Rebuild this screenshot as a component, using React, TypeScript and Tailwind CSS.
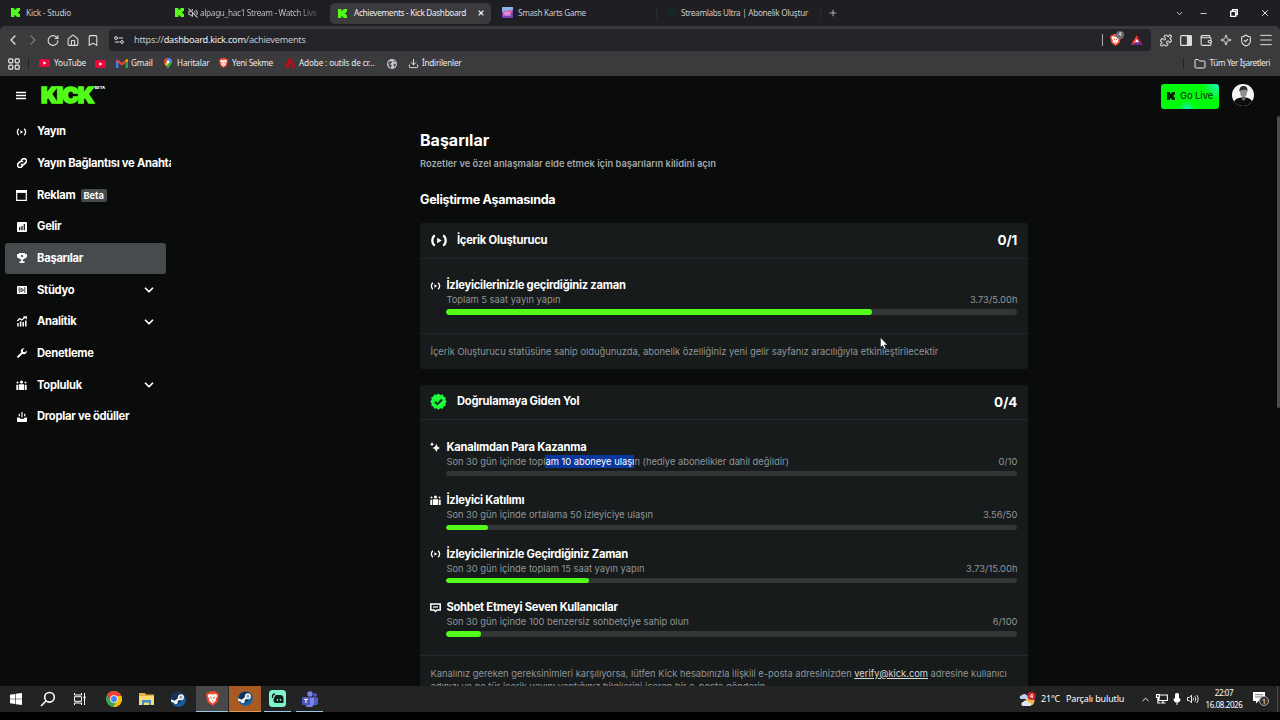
import type { ReactNode } from 'react';
import {
  Bookmark,
  ChevronDown,
  ChevronLeft,
  ChevronRight,
  ChevronUp,
  Download,
  Folder,
  House,
  Menu,
  Minus,
  Plus,
  Puzzle,
  RotateCw,
  ShieldCheck,
  Sparkle,
  VolumeOff,
  Wallet,
  X,
} from 'lucide-react';

interface IconProps {
  className?: string;
}

interface NavEntry {
  label: string;
  icon: ReactNode;
  badge?: string;
  active?: boolean;
  expandable?: boolean;
}

interface Goal {
  title: string;
  description: ReactNode;
  value: string;
  percent: number;
  icon: ReactNode;
}

/* ---------- Logos and icons ---------- */

function KickMark({ className = 'size-[9px] text-[#53fc18]' }: IconProps) {
  return (
    <svg viewBox="0 0 9 9" className={className} fill="currentColor">
      <path d="M0 0h3.4v2h1V1h1.1V0H9v3H8v1H7v1h1v1h1v3H5.500V8H4.400V7h-1v2H0z" />
    </svg>
  );
}

function BraveLogo({ className }: IconProps) {
  return (
    <svg viewBox="0 0 20 22" className={className}>
      <path d="M6 0h8l2 2 2-.3L20 5l-1 3 .3 2L17 17l-7 5-7-5L.7 10 1 8 0 5l2-3.300L4 2z" fill="#f4492c" />
      <path d="M4.500 4l5.500 1 5.500-1 2 3-3 5 1 2-5.500 4.500L4.500 14l1-2-3-5z" fill="#fff" />
      <path d="M6 8l3 1-1 3zM14 8l-3 1 1 3zM8 14h4l-2 1.500z" fill="#f4492c" />
    </svg>
  );
}

function YouTubeLogo() {
  return (
    <svg viewBox="0 0 11 8" className="h-[8px] w-[11px]">
      <rect width="11" height="8" rx="2" fill="#e8083a" />
      <path d="M4.300 2.200v3.600L7.500 4z" fill="#fff" />
    </svg>
  );
}

function GmailLogo() {
  return (
    <svg viewBox="0 0 12 9" className="h-[9px] w-[12px]" fill="none" strokeWidth="2.200">
      <path d="M1.200 9V1.500" stroke="#4285f4" />
      <path d="M10.800 9V1.500" stroke="#34a853" />
      <path d="M.8 1.200L6 5.300l5.200-4.100" stroke="#ea4335" />
      <path d="M10 2l1.600-1.200" stroke="#fbbc04" />
    </svg>
  );
}

function MapsLogo() {
  return (
    <svg viewBox="0 0 8 11" className="h-[11px] w-[8px]">
      <path d="M4 0a4 4 0 0 1 4 4c0 2.500-3 4-4 7-1-3-4-4.500-4-7a4 4 0 0 1 4-4z" fill="#34a853" />
      <path d="M0 4a4 4 0 0 1 4-4l-1 4-2.300 2.200z" fill="#ea4335" />
      <path d="M4 0a4 4 0 0 1 4 4L4 4z" fill="#4285f4" />
      <path d="M.7 6.200L3 4l1.500 1.500-2 2.800z" fill="#fbbc04" />
      <circle cx="4" cy="4" r="1.400" fill="#fff" />
    </svg>
  );
}

function GlobeIcon() {
  return (
    <svg viewBox="0 0 10 10" className="size-[10px]">
      <circle cx="5" cy="5" r="5" fill="#c9c9cc" />
      <path d="M1 3.500L3 2l2 .5-.5 1.500L3 5l1.500 1v1.500L3.500 9 2 7.500zM6 1l2.500 1.500L7 3.500zM6.500 5L9 4.800 8.500 7 7 8z" fill="#4a4a4e" />
    </svg>
  );
}

function LiveIcon({ className }: IconProps) {
  return (
    <svg viewBox="0 0 18 14" className={className} fill="none" stroke="currentColor" strokeWidth="2.400">
      <path d="M4.500 1.500C.9 3.800.9 10.200 4.500 12.500M13.500 1.500c3.600 2.300 3.600 8.700 0 11" />
      <path d="M7 4l5 3-5 3z" fill="currentColor" stroke="none" />
    </svg>
  );
}

function PeopleIcon({ className }: IconProps) {
  return (
    <svg viewBox="0 0 11 11" className={className} fill="currentColor">
      <circle cx="5.500" cy="2" r="1.600" />
      <circle cx="1.500" cy="2.600" r="1" />
      <circle cx="9.500" cy="2.600" r="1" />
      <path d="M3 4.300h5V10H3zM.3 4.800h2V10h-2zM8.700 4.800h2V10h-2z" />
    </svg>
  );
}

function ChatIcon({ className }: IconProps) {
  return (
    <svg viewBox="0 0 11 10" className={className} fill="none" stroke="currentColor" strokeWidth="1.500">
      <path d="M.8.900h9.400v6H7L5.500 8.500 4 6.900H.8z" />
      <path d="M3 4h5" strokeWidth="1.200" />
    </svg>
  );
}

function SparklesIcon({ className }: IconProps) {
  return (
    <svg viewBox="0 0 10 10" className={className} fill="currentColor">
      <path d="M6.300 1.800l1.300 2.900L10 6 7.600 7.300 6.300 10 5 7.300 2.500 6 5 4.700z" />
      <path d="M2 .1l.7 1.400 1.400.7-1.400.7L2 4.300l-.7-1.400L-.1 2.200l1.400-.7z" />
    </svg>
  );
}

function VerifiedIcon() {
  return (
    <svg viewBox="0 0 18 18" className="size-[17px]">
      <path
        d="M9 .5l2 1.500 2.500-.5.9 2.300 2.300.9-.5 2.500L17.700 9l-1.500 2 .5 2.500-2.300.9-.9 2.300-2.500-.5-2 1.500-2-1.500-2.500.5-.9-2.300-2.300-.9.5-2.500L.3 9l1.500-2-.5-2.500 2.300-.9.9-2.300L7 2z"
        fill="#21fb3c"
      />
      <path d="M5.200 9.300l2.600 2.500 5-5" fill="none" stroke="#10331a" strokeWidth="2.200" />
    </svg>
  );
}

function LinkIcon() {
  return (
    <svg viewBox="0 0 10 10" className="size-[10px]" fill="none" stroke="currentColor" strokeWidth="1.600">
      <path d="M4 2.600L5.400 1.300a2.300 2.300 0 0 1 3.300 3.300L7.200 6.100a2.250 2.250 0 0 1-3.200 0" />
      <path d="M6 7.400L4.600 8.700a2.300 2.300 0 0 1-3.300-3.300L2.800 3.900a2.250 2.250 0 0 1 3.200 0" />
    </svg>
  );
}

function WindowIcon() {
  return (
    <svg viewBox="0 0 11 11" className="size-[11px]" fill="none" stroke="currentColor">
      <path d="M.7.500h9.600v9.800H.7z" strokeWidth="1.200" />
      <path d="M0 1.600h11" strokeWidth="2.600" />
    </svg>
  );
}

function RevenueIcon() {
  return (
    <svg viewBox="0 0 10 10" className="size-[10px]">
      <rect width="10" height="10" rx="1" fill="currentColor" />
      <path d="M2.700 8.300V5M5 8.300V4M7.300 8.300V2" stroke="#0a0b0b" strokeWidth="1.200" />
    </svg>
  );
}

function TrophyIcon() {
  return (
    <svg viewBox="0 0 10 10" className="size-[10px]" fill="currentColor">
      <path d="M2 0h6v.9h2v2.300C10 4.600 8.700 5.400 7.400 5.500 7 6.200 6.400 6.500 5.800 6.600V8.300H7.500V10h-5V8.300h1.700V6.600C3.600 6.500 3 6.200 2.600 5.500 1.300 5.400 0 4.600 0 3.200V.9h2z" />
      <path d="M5 1.400l1.400 1.500L5 4.400 3.600 2.900z" fill="#474b4d" />
    </svg>
  );
}

function StudioIcon() {
  return (
    <svg viewBox="0 0 10 8" className="h-[8px] w-[10px]">
      <rect width="10" height="8" rx=".5" fill="currentColor" />
      <path d="M2.200 1.200v5.600M7.800 1.200v5.600M4 2.300v3.400L6.700 4z" stroke="#0a0b0b" strokeWidth=".8" fill="none" />
    </svg>
  );
}

function AnalyticsIcon() {
  return (
    <svg viewBox="0 0 10 11" className="h-[11px] w-[10px]" fill="none" stroke="currentColor" strokeWidth="1.300">
      <path d="M.3 5l2.400-2.500 2 1.500L8 1.200M6.300.8h3v2.500" />
      <path d="M1 10.500V7M3.600 10.500V5.500M6.200 10.500V6M8.800 10.500V4.500" strokeWidth="1.500" />
    </svg>
  );
}

function WrenchIcon() {
  return (
    <svg viewBox="0 0 10 10" className="size-[10px]" fill="currentColor">
      <path d="M7.600.3L5.800 2.100l.3 1.800 1.800.3L9.700 2.400c.6 1.900-.8 4-3 3.800L5.300 6 1.900 9.600C.8 10.300-.3 9.200.4 8.100L4 4.700l-.1-1.400C3.700 1.100 5.700-.3 7.600.3z" />
    </svg>
  );
}

function DropsIcon() {
  return (
    <svg viewBox="0 0 10 10" className="size-[10px]" fill="currentColor">
      <path d="M0 5.500h2.300l1 1.300h3.400l1-1.300H10V10H0zM4.400 0h1.200v5.300H4.400zM1.700 1.800h1.200v2.500H1.700zM7.100 1.800h1.200v2.500H7.100z" />
    </svg>
  );
}

function SteamLogo() {
  return (
    <svg viewBox="0 0 16 16" className="size-[15px]">
      <circle cx="8" cy="8" r="7.800" fill="#1560a0" />
      <path d="M.6 6.500A7.800 7.800 0 0 1 15 5l-4 5-5 3.500z" fill="#123058" />
      <path d="M0 9l4.500 1.600L8 7.500l1-2.500" stroke="#f2f5f8" strokeWidth="2.400" fill="none" />
      <circle cx="10.600" cy="5.600" r="2.500" fill="#8fa6bf" stroke="#f2f5f8" strokeWidth="1.600" />
      <circle cx="5.200" cy="11" r="2" fill="#f2f5f8" />
    </svg>
  );
}

/* ---------- Browser chrome ---------- */

function BrowserTabs() {
  return (
    <div className="flex h-[26px] shrink-0 items-center bg-[#1f1f23] text-[8.2px] tracking-[-0.3px] text-[#c9c9cc]">
      <div className="flex w-[166px] items-center gap-[6px] pl-[11px]">
        <KickMark />
        <span className="tracking-[-0.15px]">Kick - Studio</span>
      </div>
      <div className="flex w-[164px] items-center pl-[9px]">
        <KickMark />
        <VolumeOff className="ml-[4px] size-[10px]" strokeWidth={2.500} />
        <span className="ml-[2px] w-[119px] bg-linear-to-r from-[#c9c9cc] from-80% to-[#3c3c40] bg-clip-text text-transparent">
          alpagu_hac1 Stream - Watch Live
        </span>
      </div>
      <div className="flex h-[21px] w-[161px] items-center rounded-[5px] bg-[#3b3b3e] pr-[6px] pl-[8px] text-[#f0f0f2]">
        <KickMark />
        <span className="ml-[7px]">Achievements - Kick Dashboard</span>
        <X className="ml-auto size-[8px]" strokeWidth={3.500} />
      </div>
      <div className="flex w-[166px] items-center border-r border-[#2b2b2f] pl-[11px]">
        <svg viewBox="0 0 11 11" className="size-[11px]">
          <rect width="11" height="11" rx="1" fill="#7a3fb0" />
          <path d="M0 0h11v3L0 5z" fill="#8fb3e6" />
          <path d="M1 5l4-1 5-1v3L6 8 1 9z" fill="#e05ab4" />
          <path d="M2 6h6M3 8h6" stroke="#f4d9ff" strokeWidth=".8" />
        </svg>
        <span className="ml-[5px]">Smash Karts Game</span>
      </div>
      <div className="flex w-[164px] items-center border-r border-[#2b2b2f] pl-[10px]">
        <span className="size-[9px] rounded-[2px] bg-[#172527]" />
        <span className="ml-[5px]">Streamlabs Ultra | Abonelik Oluştur</span>
      </div>
      <Plus className="ml-[7px] size-[10px]" />
      <div className="ml-auto flex items-center pr-[10px] text-white">
        <ChevronDown className="size-[9px]" />
        <Minus className="ml-[15px] size-[9px]" strokeWidth={2} />
        <svg viewBox="0 0 8 8" className="ml-[22px] size-[8px]" fill="none" stroke="currentColor" strokeWidth="1.300">
          <path d="M.7 2.300h5v5h-5zM2.500 2V.7h4.800v4.800H6" />
        </svg>
        <X className="ml-[22px] size-[10px]" />
      </div>
    </div>
  );
}

function Toolbar() {
  return (
    <div className="bg-[#1f1f23]">
      <div className="flex h-[25px] items-end rounded-t-[5px] bg-[#3b3b3e] pr-[4px] pl-[3px] text-[#dededf]">
        <div className="flex h-[22px] items-center *:w-[20px]">
          <ChevronLeft className="h-[16px]" />
          <ChevronRight className="h-[16px] text-[#77777b]" />
          <RotateCw className="h-[13px]" />
          <House className="h-[13px]" />
          <Bookmark className="h-[13px]" />
        </div>
        <div className="ml-[6px] flex h-[22px] w-[1042px] items-center rounded-[4px] bg-[#242428] pr-[8px] pl-[5px]">
          <svg viewBox="0 0 10 8" className="h-[8px] w-[10px]" fill="none" stroke="currentColor">
            <circle cx="2" cy="2" r="1.400" />
            <circle cx="8" cy="6" r="1.400" />
            <path d="M4.500 2H9M1 6h4.500" />
          </svg>
          <span className="ml-[10px] text-[9.2px] tracking-[-0.25px] text-[#c4c4c8]">
            https://<span className="text-[#eeeef0]">dashboard.kick.com</span>/achievements
          </span>
          <span className="ml-auto h-[12px] w-px bg-[#a9a9ac]" />
          <div className="relative ml-[7px]">
            <BraveLogo className="h-[12px] w-[11px]" />
            <span className="absolute -top-[3px] left-[6px] flex size-[8px] items-center justify-center rounded-full bg-[#6b6b70] text-[5px] text-white">
              4
            </span>
          </div>
          <svg viewBox="0 0 12 10" className="ml-[10px] h-[10px] w-[12px]">
            <path d="M6 0L0 10h6z" fill="#ff4724" />
            <path d="M6 0l6 10H6z" fill="#9e1f63" />
            <path d="M0 10h12L6 6.500z" fill="#662d91" />
            <path d="M6 4l2 3.300H4z" fill="#fff" />
          </svg>
        </div>
        <div className="ml-auto flex h-[22px] items-center *:w-[20px]">
          <Puzzle className="h-[13px]" />
          <svg viewBox="0 0 20 11" className="h-[11px]" fill="none" stroke="currentColor" strokeWidth="1.200">
            <rect x="4.600" y=".6" width="10.800" height="9.800" rx="1" />
            <path d="M11.500 1h3.500v9h-3.500z" fill="currentColor" />
          </svg>
          <Wallet className="h-[13px]" />
          <Sparkle className="h-[12px]" />
          <ShieldCheck className="h-[13px]" />
          <Menu className="h-[16px]" strokeWidth={1.500} />
        </div>
      </div>
    </div>
  );
}

function BookmarksBar() {
  return (
    <div className="flex h-[25px] shrink-0 items-center bg-[#3b3b3e] pr-[10px] pl-[8px] text-[8.2px] tracking-[-0.15px] text-[#ececee]">
      <svg viewBox="0 0 12 12" className="size-[12px]" fill="none" stroke="currentColor" strokeWidth="1.200">
        <rect x=".8" y=".8" width="4" height="4" rx="1" />
        <rect x="7.200" y=".8" width="4" height="4" rx="1" />
        <rect x=".8" y="7.200" width="4" height="4" rx="1" />
        <rect x="7.200" y="7.200" width="4" height="4" rx="1" />
      </svg>
      <span className="ml-[8px] h-[11px] w-px bg-[#232327]" />
      <div className="ml-[10px] flex w-[56px] items-center gap-[4px]">
        <YouTubeLogo />
        YouTube
      </div>
      <YouTubeLogo />
      <div className="ml-[10px] flex w-[48px] items-center gap-[3px]">
        <GmailLogo />
        Gmail
      </div>
      <div className="flex w-[55px] items-center gap-[5px]">
        <MapsLogo />
        Haritalar
      </div>
      <div className="flex w-[66px] items-center gap-[4px] tracking-[-0.3px]">
        <BraveLogo className="h-[10px] w-[9px]" />
        Yeni Sekme
      </div>
      <div className="flex w-[102px] items-center gap-[4px]">
        <svg viewBox="0 0 10 10" className="size-[10px]" fill="#b3101c">
          <path d="M0 10V8l3.500-7.500h3L10 8v2H7.500L5 5 3.500 8.500H5V10z" />
        </svg>
        Adobe : outils de cr...
      </div>
      <GlobeIcon />
      <Download className="ml-[11px] size-[11px]" />
      <span className="ml-[3px] tracking-[-0.25px]">İndirilenler</span>
      <span className="ml-auto h-[11px] w-px bg-[#232327]" />
      <Folder className="ml-[10px] size-[12px]" />
      <span className="ml-[4px] tracking-[-0.4px]">Tüm Yer İşaretleri</span>
    </div>
  );
}

/* ---------- Dashboard ---------- */

function DashboardHeader() {
  return (
    <header className="flex h-[40px] shrink-0 items-center pr-[26px] pb-[2px] pl-[16px]">
      <svg viewBox="0 0 10 8" className="h-[9px] w-[10px]" stroke="#fff" strokeWidth="1.700">
        <path d="M0 1h10M0 4h10M0 7h10" />
      </svg>
      <div className="ml-[15px] flex items-start">
        <span className="text-[22px] leading-[20px] font-black tracking-[-0.9px] text-[#53fc18] [-webkit-text-stroke:1.5px_#53fc18]">
          KICK
        </span>
        <span className="ml-[1px] text-[4px] leading-[6px] font-extrabold text-white">BETA</span>
      </div>
      <button className="mt-[2px] ml-auto flex h-[25px] w-[58px] items-center rounded-[3px] bg-[#02fb0c] bg-[radial-gradient(circle_at_100%_0%,#20f5c8_0,transparent_16px),radial-gradient(circle_at_45%_100%,#10efc0_0,transparent_8px)] pl-[6px] text-[#0b3a10]">
        <KickMark className="size-[8px] text-[#06230a]" />
        <span className="ml-[5px] text-[9.3px] font-medium">Go Live</span>
      </button>
      <svg viewBox="0 0 22 22" className="ml-[13px] size-[22px]">
        <clipPath id="avatar">
          <circle cx="11" cy="11" r="11" />
        </clipPath>
        <g clipPath="url(#avatar)">
          <rect width="22" height="22" fill="#f5f5f5" />
          <path d="M1 22c.5-5 2-7.500 8-8.500h5c5 1 7 3.500 7.500 8.500z" fill="#0a0b0b" />
          <ellipse cx="11.500" cy="8.500" rx="3.400" ry="5" fill="#8f8f8f" />
          <path d="M7.500 7.500C7 3 10 1.500 12 2c3 .5 4 3 3.300 6L14 5.500l-4 .5z" fill="#2a2a2a" />
          <path d="M9.500 13h4v2.500l-2 1.500-2-2z" fill="#666" />
        </g>
      </svg>
    </header>
  );
}

const navEntries: NavEntry[] = [
  { label: 'Yayın', icon: <LiveIcon className="h-[8px] w-[11px]" /> },
  { label: 'Yayın Bağlantısı ve Anahtarı', icon: <LinkIcon /> },
  { label: 'Reklam', icon: <WindowIcon />, badge: 'Beta' },
  { label: 'Gelir', icon: <RevenueIcon /> },
  { label: 'Başarılar', icon: <TrophyIcon />, active: true },
  { label: 'Stüdyo', icon: <StudioIcon />, expandable: true },
  { label: 'Analitik', icon: <AnalyticsIcon />, expandable: true },
  { label: 'Denetleme', icon: <WrenchIcon /> },
  { label: 'Topluluk', icon: <PeopleIcon className="size-[11px]" />, expandable: true },
  { label: 'Droplar ve ödüller', icon: <DropsIcon /> },
];

function Sidebar() {
  return (
    <nav className="flex w-[171px] shrink-0 flex-col overflow-hidden pl-[5px]">
      {navEntries.map((entry) => (
        <div
          key={entry.label}
          className={
            entry.active
              ? 'flex h-[31.67px] w-[160.500px] shrink-0 items-center rounded-[3px] bg-[#474b4d] pl-[11px]'
              : 'flex h-[31.67px] shrink-0 items-center pl-[11px]'
          }
        >
          <span className="flex w-[11px] shrink-0 justify-center">{entry.icon}</span>
          <span className="ml-[10px] text-[11.2px] font-bold tracking-[-0.26px] whitespace-nowrap">{entry.label}</span>
          {entry.badge && (
            <span className="ml-[5px] rounded-[2px] bg-[#474b4d] px-[3px] text-[9.3px] leading-[13px] font-bold tracking-[-0.1px]">
              {entry.badge}
            </span>
          )}
          {entry.expandable && <ChevronDown className="mr-[15px] ml-auto size-[14px]" strokeWidth={3} />}
        </div>
      ))}
    </nav>
  );
}

function GoalRow({ goal }: { goal: Goal }) {
  return (
    <div>
      <div className="flex h-[16px] items-center">
        <span className="flex w-[16px] shrink-0">{goal.icon}</span>
        <h4 className="text-[11.2px] font-bold tracking-[-0.24px] whitespace-nowrap">{goal.title}</h4>
      </div>
      <div className="pl-[16px]">
        <div className="flex h-[13.600px] items-center justify-between text-[9.33px] text-[#8f9698]">
          <span>{goal.description}</span>
          <span>{goal.value}</span>
        </div>
        <div className="mt-[2.300px] h-[5.400px] overflow-hidden rounded-full bg-[#333637]">
          <div className="h-full rounded-full bg-[#53fc18]" style={{ width: `${goal.percent}%` }} />
        </div>
      </div>
    </div>
  );
}

interface CardProps {
  icon: ReactNode;
  title: string;
  score: string;
  goals: Goal[];
  footer: ReactNode;
}

function AchievementCard({ icon, title, score, goals, footer }: CardProps) {
  return (
    <section className="w-[608px] rounded-[3px] bg-[#171b1c]">
      <div className="flex h-[35.500px] items-center border-b border-[#24282a] pr-[10.600px] pl-[10.400px]">
        <span className="flex w-[26.500px] shrink-0">{icon}</span>
        <h3 className="text-[11.2px] font-bold tracking-[-0.22px]">{title}</h3>
        <span className="ml-auto text-[13.4px] font-bold">{score}</span>
      </div>
      <div className="flex flex-col gap-[16.200px] pt-[19.100px] pr-[10.600px] pb-[18.200px] pl-[10.400px]">
        {goals.map((goal) => (
          <GoalRow key={goal.title} goal={goal} />
        ))}
      </div>
      <p className="border-t border-[#24282a] px-[10.500px] py-[10.800px] text-[9.33px] leading-[13.400px] text-[#8f9698]">
        {footer}
      </p>
    </section>
  );
}

const creatorGoals: Goal[] = [
  {
    title: 'İzleyicilerinizle geçirdiğiniz zaman',
    description: 'Toplam 5 saat yayın yapın',
    value: '3.73/5.00h',
    percent: 74.6,
    icon: <LiveIcon className="h-[8px] w-[11px]" />,
  },
];

const verificationGoals: Goal[] = [
  {
    title: 'Kanalımdan Para Kazanma',
    description: (
      <>
        Son 30 gün içinde topl<span className="bg-[#0b389f] py-px text-white">am 10 aboneye ulaşı</span>n (hediye
        abonelikler dahil değildir)
      </>
    ),
    value: '0/10',
    percent: 0,
    icon: <SparklesIcon className="size-[10px]" />,
  },
  {
    title: 'İzleyici Katılımı',
    description: 'Son 30 gün içinde ortalama 50 izleyiciye ulaşın',
    value: '3.56/50',
    percent: 7.2,
    icon: <PeopleIcon className="size-[11px]" />,
  },
  {
    title: 'İzleyicilerinizle Geçirdiğiniz Zaman',
    description: 'Son 30 gün içinde toplam 15 saat yayın yapın',
    value: '3.73/15.00h',
    percent: 24.9,
    icon: <LiveIcon className="h-[8px] w-[11px]" />,
  },
  {
    title: 'Sohbet Etmeyi Seven Kullanıcılar',
    description: 'Son 30 gün içinde 100 benzersiz sohbetçiye sahip olun',
    value: '6/100',
    percent: 6,
    icon: <ChatIcon className="h-[10px] w-[11px]" />,
  },
];

function Achievements() {
  return (
    <main className="flex flex-1 flex-col overflow-hidden pt-[14px] pl-[249px]">
      <h1 className="text-[16px] leading-[20px] font-bold">Başarılar</h1>
      <p className="mt-[7px] text-[9.33px] leading-[14px] font-semibold text-[#a3a8aa]">
        Rozetler ve özel anlaşmalar elde etmek için başarıların kilidini açın
      </p>
      <h2 className="mt-[20px] text-[12.6px] leading-[18px] font-bold tracking-[-0.32px]">Geliştirme Aşamasında</h2>
      <div className="mt-[14px] flex flex-col gap-[15.500px]">
        <AchievementCard
          icon={<LiveIcon className="h-[13px] w-[18px]" />}
          title="İçerik Oluşturucu"
          score="0/1"
          goals={creatorGoals}
          footer="İçerik Oluşturucu statüsüne sahip olduğunuzda, abonelik özelliğiniz yeni gelir sayfanız aracılığıyla etkinleştirilecektir"
        />
        <AchievementCard
          icon={<VerifiedIcon />}
          title="Doğrulamaya Giden Yol"
          score="0/4"
          goals={verificationGoals}
          footer={
            <>
              Kanalınız gereken gereksinimleri karşılıyorsa, lütfen Kick hesabınızla ilişkili e-posta adresinizden{' '}
              <a className="text-[#d5d8d9] underline">verify@kick.com</a> adresine kullanıcı
              <br />
              adınızı ve ne tür içerik yayını yaptığınız bilgilerini içeren bir e-posta gönderin.
            </>
          }
        />
      </div>
    </main>
  );
}

/* ---------- Windows taskbar ---------- */

function Taskbar() {
  return (
    <div className="flex h-[26px] shrink-0 items-center bg-[#232323] text-white">
      <div className="flex h-full items-center">
        <span className="flex w-[32px] justify-center">
          <svg viewBox="0 0 12 12" className="size-[12px]" fill="#fff">
            <path d="M0 1.700l5.200-.8v4.800H0zM5.800.8L12 0v5.700H5.800zM0 6.300h5.200v4.800L0 10.300zM5.800 6.300H12V12l-6.200-.8z" />
          </svg>
        </span>
        <span className="flex w-[32px] justify-center">
          <svg viewBox="0 0 16 16" className="size-[16px]" fill="none" stroke="#fff" strokeWidth="1.600">
            <circle cx="9.500" cy="6.300" r="4.800" />
            <path d="M6.200 9.800L1 15" />
          </svg>
        </span>
        <span className="flex w-[32px] justify-center">
          <svg viewBox="0 0 12 12" className="size-[12px]" fill="none" stroke="#fff" strokeWidth="1">
            <path d="M.5 0v2h7V0M.5 12v-2h7v2M.5 3.700h7v4.600h-7zM10.500 0v12" />
            <path d="M9.500 3.500h2v2h-2z" fill="#fff" stroke="none" />
          </svg>
        </span>
        <span className="flex w-[36px] justify-center">
          <svg viewBox="0 0 16 16" className="size-[16px]">
            <circle cx="8" cy="8" r="8" fill="#34a853" />
            <path d="M1.070 4A8 8 0 0 1 14.930 4L15.500 5H8L4.500 10z" fill="#ea4335" />
            <path d="M15.400 5A8 8 0 0 1 7 16l4.500-7L8 5z" fill="#fbbc04" />
            <circle cx="8" cy="8" r="3.800" fill="#fff" />
            <circle cx="8" cy="8" r="3" fill="#4285f4" />
          </svg>
        </span>
        <span className="flex w-[28px] justify-center">
          <svg viewBox="0 0 15 12" className="h-[12px] w-[15px]">
            <path d="M0 0h6l1 1.500h8V12H0z" fill="#e3b341" />
            <path d="M0 3h15v9H0z" fill="#fbdb74" />
            <path d="M3 7h9v5h-2V9.500H5V12H3z" fill="#3f8fd2" />
          </svg>
        </span>
        <span className="flex w-[36px] justify-center">
          <SteamLogo />
        </span>
        <span className="flex h-full w-[32px] items-center justify-center border-b border-[#9cc9e6] bg-[#484848]">
          <BraveLogo className="h-[15px] w-[13px]" />
        </span>
        <span className="ml-px flex h-full w-[32px] items-center justify-center border-b border-[#d99a62] bg-[#a85a22]">
          <SteamLogo />
        </span>
        <span className="ml-[3px] flex h-full w-[27px] items-center justify-center border-b border-[#9cc9e6]">
          <svg viewBox="0 0 17 17" className="size-[17px]">
            <rect width="17" height="17" rx="3.500" fill="#7ff5cb" />
            <path d="M3.500 8V6.500C3.500 5 4.500 4 6 4" stroke="#0c231d" strokeWidth="1.300" fill="none" />
            <path d="M6.500 5H11c2.500 0 3.500 1.500 3.500 3.500V13H7c-2 0-2.500-1-2.500-2.500V9z" fill="#0c231d" />
            <path d="M8.500 9v1.800M11.500 9v1.800" stroke="#7ff5cb" strokeWidth="1.200" />
          </svg>
        </span>
        <span className="ml-[5px] flex h-full w-[27px] items-center justify-center border-b border-[#9cc9e6]">
          <svg viewBox="0 0 16 16" className="size-[16px]">
            <circle cx="8" cy="3" r="2.700" fill="#7b83eb" />
            <circle cx="13" cy="4" r="1.900" fill="#5059c9" />
            <path d="M10 6.500h6V12a3 3 0 0 1-5 1.500z" fill="#5059c9" />
            <path d="M3 6.500h9V12a4.500 4.500 0 0 1-9 0z" fill="#7b83eb" />
            <rect y="6" width="8" height="8" rx="1" fill="#4b53bc" />
            <path d="M2 8.200h4M4 8.200V12" stroke="#fff" strokeWidth="1.100" />
          </svg>
        </span>
      </div>
      <div className="ml-auto flex h-full items-center">
        <svg viewBox="0 0 17 15" className="h-[15px] w-[17px]">
          <circle cx="11" cy="9" r="4.500" fill="#f3b640" />
          <path d="M1 6.500a2.500 2.500 0 0 1 2-3.500 3 3 0 0 1 5 .5 1.800 1.800 0 0 1 0 3.500H2z" fill="#b9d0f2" />
          <path d="M3 13.500a2 2 0 0 1 1-3.500 3.500 3.500 0 0 1 6 .5 1.800 1.800 0 0 1 1 3.500H4z" fill="#dbe6f7" />
          <circle cx="12.500" cy="4" r="4" fill="#d1242f" />
          <path d="M13 1.800L11.200 4.700h2.900M13.200 2v4" stroke="#fff" strokeWidth=".8" fill="none" />
        </svg>
        <span className="ml-[5px] w-[20px] text-[9px] tracking-[-0.2px]">21°C</span>
        <span className="ml-[5px] w-[60px] text-[9px] tracking-[-0.15px] whitespace-nowrap">Parçalı bulutlu</span>
        <ChevronUp className="ml-[14px] size-[11px]" />
        <svg viewBox="0 0 12 10" className="ml-[5px] h-[10px] w-[12px]" fill="none" stroke="#fff" strokeWidth="1.100">
          <path d="M3 1h8.400v5.500H3zM4.500 9h5M7 6.500V9M.5.5h2.800v3H.5zM1.900 3.500V9H4" />
        </svg>
        <svg viewBox="0 0 8 12" className="ml-[5px] h-[12px] w-[8px]" fill="#fff">
          <rect x="2" width="4" height="8" rx="1.500" />
          <path d="M.5 5.500h7c0 2.500-1 4-3 4V12h-1V9.500c-2 0-3-1.500-3-4z" />
        </svg>
        <svg viewBox="0 0 12 10" className="ml-[6px] h-[10px] w-[12px]" fill="none" stroke="#fff" strokeWidth=".9">
          <path d="M.5 3.500h1.800L4.500 1.200v7.600L2.300 6.500H.5zM6 3.500c.7.8.7 2.200 0 3M7.800 2.300c1.300 1.500 1.300 3.900 0 5.400M9.600 1c2 2.300 2 5.700 0 8" />
        </svg>
        <div className="ml-[6px] flex w-[38px] flex-col items-center text-[8px] leading-[12px] tracking-[-0.4px]">
          <span>22:07</span>
          <span>16.08.2026</span>
        </div>
        <div className="relative ml-[10px] h-[14px] w-[17px]">
          <svg viewBox="0 0 12 12" className="size-[12px]" fill="#fff">
            <path d="M0 0h12v9H5.500L3 11.500V9H0z" />
            <path d="M2 2.700h8M2 5h8" stroke="#555" strokeWidth=".8" />
          </svg>
          <span className="absolute top-[4px] left-[6px] flex size-[10px] items-center justify-center rounded-full border border-[#aaa] bg-[#333] text-[7px] leading-none">
            1
          </span>
        </div>
        <span className="ml-[7px] h-full w-px bg-[#4a4a4a]" />
        <span className="w-[2px]" />
      </div>
    </div>
  );
}

export default function App() {
  return (
    <div className="relative flex h-[720px] w-[1280px] flex-col overflow-hidden bg-black font-['Noto_Sans',sans-serif] whitespace-nowrap">
      <BrowserTabs />
      <Toolbar />
      <BookmarksBar />
      <div className="flex min-h-0 flex-1 flex-col bg-[#0a0b0b] font-['Inter',sans-serif] text-white">
        <DashboardHeader />
        <div className="flex min-h-0 flex-1">
          <Sidebar />
          <Achievements />
          <div className="h-[292px] w-[3px] shrink-0 rounded-full bg-[#4a4c4d]" />
        </div>
      </div>
      <Taskbar />
      <div className="h-[8px] shrink-0 bg-black" />
      <svg viewBox="0 0 8 13" className="absolute top-[337px] left-[880px] h-[13px] w-[8px]">
        <path d="M.5.5v10l2.200-2 1.500 3.500 1.600-.7-1.500-3.300H7.500z" fill="#fff" stroke="#111" strokeWidth=".5" />
      </svg>
    </div>
  );
}
